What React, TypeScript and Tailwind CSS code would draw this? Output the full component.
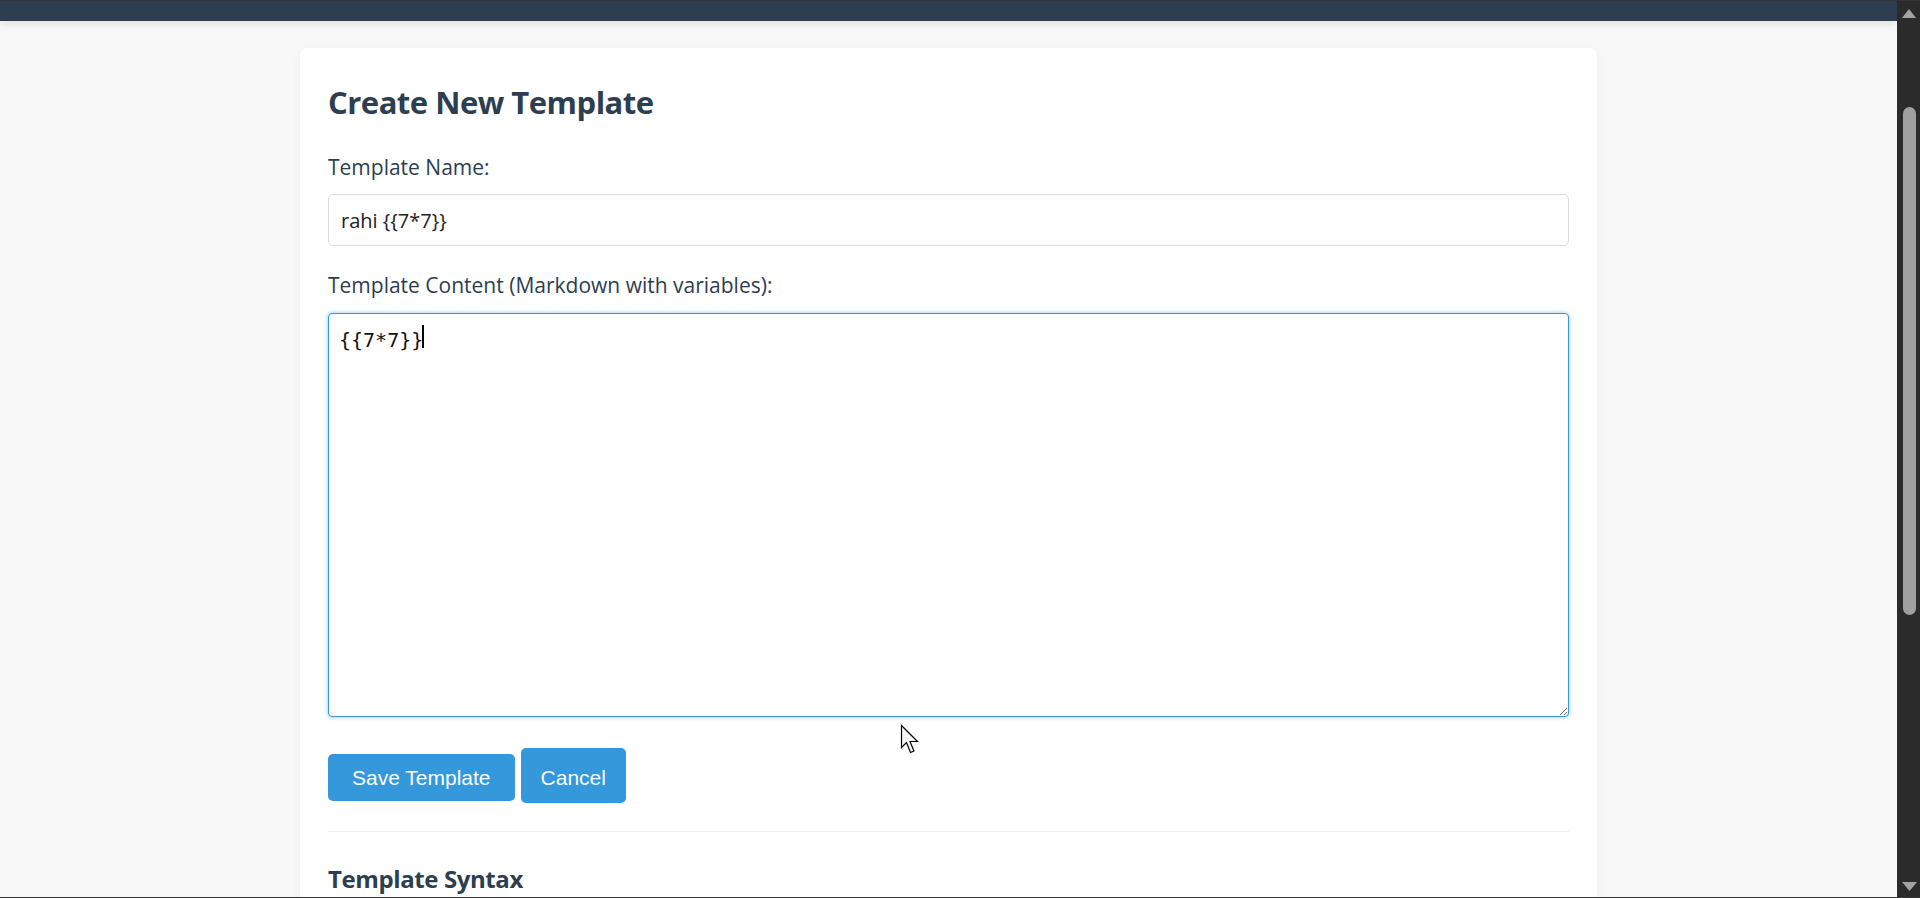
import React from "react";

function Scrollbar() {
  return (
    <div className="w-[23px] shrink-0 bg-[#2b2b2b] flex flex-col items-center">
      <svg width="14" height="9" viewBox="0 0 14 9" className="mt-[8px] ml-[1px]">
        <polygon points="7,0 14,9 0,9" fill="#a3a3a3" />
      </svg>
      <div className="mt-[89px] ml-[1px] w-[13px] h-[508px] rounded-full bg-[#a0a0a0]" />
      <div className="flex-1" />
      <svg width="15" height="9" viewBox="0 0 15 9" className="mb-[6px] ml-[1px]">
        <polygon points="0,0 15,0 7.5,9" fill="#a3a3a3" />
      </svg>
    </div>
  );
}

function Cursor() {
  return (
    <svg
      width="20"
      height="32"
      viewBox="0 0 20 32"
      className="absolute left-[900px] top-[723px] z-20"
    >
      <path
        d="M1.5 1.5 L1.5 23.5 L6.5 18.5 L10.5 28.5 L14 27 L10 17.5 L17.5 17.5 Z"
        fill="#f4f4f4"
        stroke="#000"
        strokeWidth="1.2"
        strokeLinejoin="miter"
      />
    </svg>
  );
}

export default function App() {
  return (
    <div
      className="h-[898px] w-[1920px] overflow-hidden flex flex-col bg-[#2b2b2b]"
      style={{ fontFamily: '"Open Sans", "Noto Sans", sans-serif' }}
    >
      <div className="h-[1px] shrink-0 bg-[#363636]" />
      <div className="flex flex-1 min-h-0">
        <div className="relative flex-1 flex flex-col bg-[#f8f8f8] overflow-hidden">
          <div className="relative z-10 h-[20px] shrink-0 bg-[#2c3e50] shadow-[0_2px_10px_rgba(0,0,0,0.12)]" />
          <div className="flex justify-center pt-[27px]">
            <div className="w-[1297px] bg-white rounded-[8px] shadow-[0_2px_10px_rgba(0,0,0,0.05)] px-[28px] pt-[28px] pb-[60px]">
              <h2 className="mt-[6px] mb-[31px] text-[31px] leading-[40px] tracking-[-0.5px] font-bold text-[#2c3e50]">
                Create New Template
              </h2>

              <label className="block mb-[13px] text-[21px] leading-[28px] font-medium text-[#2c3e50]">
                Template Name:
              </label>
              <input
                type="text"
                readOnly
                defaultValue="rahi {{7*7}}"
                className="block w-full h-[52px] mb-[25px] px-[12px] border border-[#dddddd] rounded-[5px] text-[20px] text-[#222] bg-white outline-none"
              />

              <label className="block mb-[14px] text-[21px] leading-[28px] font-medium text-[#2c3e50]">
                Template Content (Markdown with variables):
              </label>
              <div className="relative mb-[31px]">
                <textarea
                  readOnly
                  defaultValue="{{7*7}}"
                  className="block w-full h-[404px] pl-[10px] pr-[12px] pt-[13px] border border-[#3498db] rounded-[4px] shadow-[0_0_4px_rgba(52,152,219,0.55)] text-[20px] leading-[26px] text-[#111] bg-white outline-none"
                  style={{ fontFamily: '"DejaVu Sans Mono", "Liberation Mono", monospace' }}
                />
                <span className="absolute left-[94px] top-[12px] w-[2px] h-[23px] bg-black" />
              </div>

              <div className="flex items-baseline gap-[6px]">
                <button
                  className="px-[24px] py-[11px] rounded-[5px] bg-[#3498db] text-white text-[21px] leading-[25px]"
                  style={{ fontFamily: '"Liberation Sans", Arial, sans-serif' }}
                >
                  Save Template
                </button>
                <button
                  className="px-[20px] pt-[17px] pb-[13px] rounded-[5px] bg-[#3498db] text-white text-[21px] leading-[25px]"
                  style={{ fontFamily: '"Liberation Sans", Arial, sans-serif' }}
                >
                  Cancel
                </button>
              </div>

              <hr className="mt-[28px] mb-[31px] border-0 h-[1px] bg-[#eeeeee]" />

              <h3 className="text-[24px] leading-[32px] tracking-[-0.4px] font-bold text-[#2c3e50]">
                Template Syntax
              </h3>
            </div>
          </div>
          <Cursor />
        </div>
        <Scrollbar />
      </div>
      <div className="h-[1px] shrink-0 bg-[#363636]" />
    </div>
  );
}
